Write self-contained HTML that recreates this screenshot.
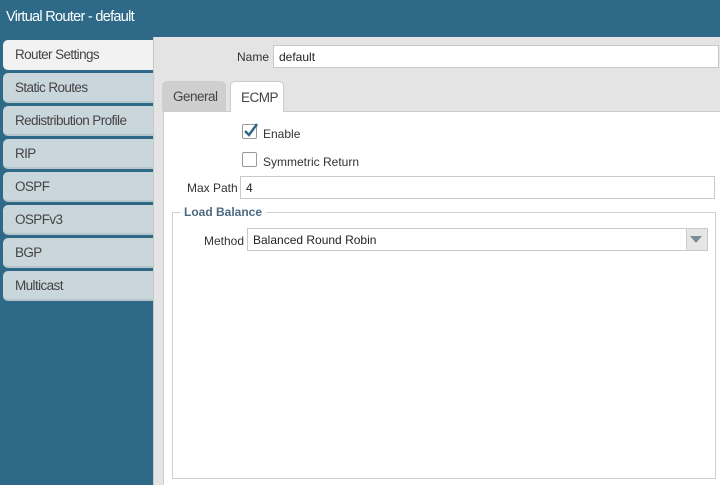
<!DOCTYPE html>
<html><head><style>
*{margin:0;padding:0;box-sizing:border-box}
body{width:720px;height:485px;overflow:hidden;background:#e4e4e4;font-family:"Liberation Sans",sans-serif;position:relative}
.hdr{position:absolute;left:0;top:0;width:720px;height:37px;background:#2e6a87;color:#fff;font-size:14.5px;padding:9px 0 0 6px;letter-spacing:-0.7px}
.side{position:absolute;left:0;top:37px;width:153px;height:448px;background:#2e6a87}
.tab{position:absolute;left:3px;width:150px;height:30px;background:#c9d6dc;border-radius:5px 0 0 5px;font-size:13.5px;color:#444;padding:7px 0 0 12px;letter-spacing:-0.6px;border-bottom:2px solid #b5c6ce}
.tab.on{background:#f2f2f2;border-bottom:none}
.abs{position:absolute}
.inp{position:absolute;background:#fff;border:1px solid #c9c9c9;font-size:12px;color:#222;padding:4px 0 0 5px}
.lbl{position:absolute;font-size:12px;color:#333}
.cb{position:absolute;width:15px;height:15px;border:1px solid #999;background:#fff;border-radius:2px}
</style></head><body>
<div class="hdr">Virtual Router - default</div>
<div class="side"></div>
<div class="tab on" style="top:40px">Router Settings</div>
<div class="tab" style="top:73px">Static Routes</div>
<div class="tab" style="top:106px">Redistribution Profile</div>
<div class="tab" style="top:139px">RIP</div>
<div class="tab" style="top:172px">OSPF</div>
<div class="tab" style="top:205px">OSPFv3</div>
<div class="tab" style="top:238px">BGP</div>
<div class="tab" style="top:271px">Multicast</div>
<div class="abs" style="left:153px;top:37px;width:567px;height:448px;background:#e4e4e4"></div>
<div class="abs" style="left:153px;top:37px;width:1px;height:448px;background:#c8c8c8"></div>
<div class="lbl" style="left:237px;top:50px">Name</div>
<div class="inp" style="left:273px;top:45px;width:446px;height:23px">default</div>
<div class="abs" style="left:163px;top:111px;width:557px;height:374px;background:#fff;border-top:1px solid #ccc;border-left:1px solid #ccc"></div>
<div class="abs" style="left:162px;top:81px;width:64px;height:30px;background:#cfcfcf;border-radius:5px 5px 0 0;font-size:13.5px;color:#444;padding:8px 0 0 11px;letter-spacing:-0.5px">General</div>
<div class="abs" style="left:230px;top:81px;width:54px;height:31px;background:#fff;border:1px solid #ccc;border-bottom:none;border-radius:5px 5px 0 0;font-size:13.5px;color:#444;padding:8px 0 0 10px;letter-spacing:-0.5px">ECMP</div>
<div class="cb" style="left:242px;top:124px"></div>
<svg class="abs" style="left:242px;top:121px" width="18" height="18"><path d="M3 10 L7 14 L15 3" stroke="#2e6a87" stroke-width="2.5" fill="none"/></svg>
<div class="lbl" style="left:263px;top:127px">Enable</div>
<div class="cb" style="left:242px;top:152px"></div>
<div class="lbl" style="left:263px;top:155px">Symmetric Return</div>
<div class="lbl" style="left:187px;top:181px">Max Path</div>
<div class="inp" style="left:240px;top:176px;width:475px;height:23px">4</div>
<div class="abs" style="left:172px;top:212px;width:544px;height:267px;border:1px solid #d0d0d0"></div>
<div class="abs" style="left:180px;top:205px;background:#fff;padding:0 4px;font-size:12px;font-weight:bold;color:#4d6a80">Load Balance</div>
<div class="lbl" style="left:204px;top:234px">Method</div>
<div class="inp" style="left:247px;top:228px;width:461px;height:23px">Balanced Round Robin</div>
<div class="abs" style="left:686px;top:229px;width:21px;height:21px;background:#e6e6e6;border-left:1px solid #ccc"></div>
<svg class="abs" style="left:689px;top:235px" width="14" height="9"><path d="M1 1 L13 1 L7 8 Z" fill="#7b8c96"/></svg>
</body></html>
